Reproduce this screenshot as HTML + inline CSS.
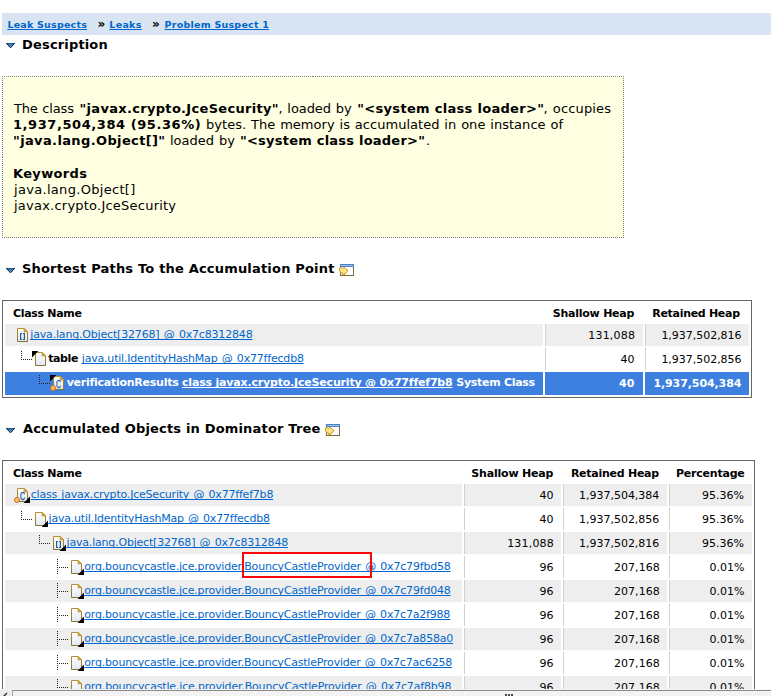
<!DOCTYPE html>
<html><head><meta charset="utf-8"><title>Leak Suspects - Problem Suspect 1</title>
<style>
html,body{margin:0;padding:0;background:#fff;overflow:hidden}
body{width:771px;height:696px;position:relative;font-family:'DejaVu Sans','Liberation Sans',sans-serif;}
.t{position:absolute;white-space:pre;line-height:1;}
.u{text-decoration:underline;text-decoration-thickness:1px;text-underline-offset:1px;text-decoration-skip-ink:none}
.b{position:absolute}
svg{position:absolute;overflow:visible}
a{color:inherit}
</style></head><body>
<svg width="0" height="0" style="left:0;top:0"><defs><linearGradient id="pg" x1="0" y1="0" x2="0" y2="1"><stop offset="0" stop-color="#ffffff"/><stop offset="1" stop-color="#dfe7f6"/></linearGradient><linearGradient id="ps" x1="0" y1="0" x2="0" y2="1"><stop offset="0" stop-color="#b8902c"/><stop offset="1" stop-color="#84702e"/></linearGradient><linearGradient id="tw" x1="0" y1="0" x2="0" y2="1"><stop offset="0" stop-color="#15568c"/><stop offset="1" stop-color="#86bfc9"/></linearGradient></defs></svg>

<div class="b" style="left:2px;top:13px;width:769px;height:22px;background:#d8e4f1;"></div>
<div class="b" style="left:2px;top:76px;width:622px;height:162px;background:#ffffe1;"></div>
<div class="b" style="left:2px;top:76px;width:311px;height:1px;background:repeating-linear-gradient(90deg,#808080 0 1px,transparent 1px 2px);"></div>
<div class="b" style="left:313px;top:76px;width:311px;height:1px;background:repeating-linear-gradient(90deg,#808080 0 1px,transparent 1px 2px);"></div>
<div class="b" style="left:2px;top:237px;width:311px;height:1px;background:repeating-linear-gradient(90deg,#808080 0 1px,transparent 1px 2px);"></div>
<div class="b" style="left:313px;top:237px;width:311px;height:1px;background:repeating-linear-gradient(90deg,#808080 0 1px,transparent 1px 2px);"></div>
<div class="b" style="left:2px;top:76px;width:1px;height:81px;background:repeating-linear-gradient(180deg,#808080 0 1px,transparent 1px 2px);"></div>
<div class="b" style="left:2px;top:157px;width:1px;height:81px;background:repeating-linear-gradient(180deg,#808080 0 1px,transparent 1px 2px);"></div>
<div class="b" style="left:623px;top:76px;width:1px;height:81px;background:repeating-linear-gradient(180deg,#808080 0 1px,transparent 1px 2px);"></div>
<div class="b" style="left:623px;top:157px;width:1px;height:81px;background:repeating-linear-gradient(180deg,#808080 0 1px,transparent 1px 2px);"></div>
<div class="b" style="left:2px;top:300px;width:748px;height:96px;border:1px solid #666666"></div>
<div class="b" style="left:5px;top:324px;width:538px;height:22px;background:#eeeeee;"></div>
<div class="b" style="left:545px;top:324px;width:98px;height:22px;background:#eeeeee;border-left:1px solid #d0d0d0;box-sizing:border-box"></div>
<div class="b" style="left:645px;top:324px;width:104px;height:22px;background:#eeeeee;border-left:1px solid #d0d0d0;box-sizing:border-box"></div>
<div class="b" style="left:545px;top:348px;width:1px;height:22px;background:#d0d0d0;"></div>
<div class="b" style="left:645px;top:348px;width:1px;height:22px;background:#d0d0d0;"></div>
<div class="b" style="left:5px;top:372px;width:538px;height:23px;background:#3d80df;"></div>
<div class="b" style="left:545px;top:372px;width:98px;height:23px;background:#3d80df;"></div>
<div class="b" style="left:645px;top:372px;width:104px;height:23px;background:#3d80df;"></div>
<div class="b" style="left:2px;top:460px;width:751px;height:298px;border:1px solid #666666"></div>
<div class="b" style="left:5px;top:484px;width:457px;height:22px;background:#eeeeee;"></div>
<div class="b" style="left:464px;top:484px;width:97px;height:22px;background:#eeeeee;border-left:1px solid #d0d0d0;box-sizing:border-box"></div>
<div class="b" style="left:563px;top:484px;width:104px;height:22px;background:#eeeeee;border-left:1px solid #d0d0d0;box-sizing:border-box"></div>
<div class="b" style="left:669px;top:484px;width:83px;height:22px;background:#eeeeee;border-left:1px solid #d0d0d0;box-sizing:border-box"></div>
<div class="b" style="left:464px;top:508px;width:1px;height:22px;background:#d0d0d0;"></div>
<div class="b" style="left:563px;top:508px;width:1px;height:22px;background:#d0d0d0;"></div>
<div class="b" style="left:669px;top:508px;width:1px;height:22px;background:#d0d0d0;"></div>
<div class="b" style="left:5px;top:532px;width:457px;height:22px;background:#eeeeee;"></div>
<div class="b" style="left:464px;top:532px;width:97px;height:22px;background:#eeeeee;border-left:1px solid #d0d0d0;box-sizing:border-box"></div>
<div class="b" style="left:563px;top:532px;width:104px;height:22px;background:#eeeeee;border-left:1px solid #d0d0d0;box-sizing:border-box"></div>
<div class="b" style="left:669px;top:532px;width:83px;height:22px;background:#eeeeee;border-left:1px solid #d0d0d0;box-sizing:border-box"></div>
<div class="b" style="left:464px;top:556px;width:1px;height:22px;background:#d0d0d0;"></div>
<div class="b" style="left:563px;top:556px;width:1px;height:22px;background:#d0d0d0;"></div>
<div class="b" style="left:669px;top:556px;width:1px;height:22px;background:#d0d0d0;"></div>
<div class="b" style="left:5px;top:580px;width:457px;height:22px;background:#eeeeee;"></div>
<div class="b" style="left:464px;top:580px;width:97px;height:22px;background:#eeeeee;border-left:1px solid #d0d0d0;box-sizing:border-box"></div>
<div class="b" style="left:563px;top:580px;width:104px;height:22px;background:#eeeeee;border-left:1px solid #d0d0d0;box-sizing:border-box"></div>
<div class="b" style="left:669px;top:580px;width:83px;height:22px;background:#eeeeee;border-left:1px solid #d0d0d0;box-sizing:border-box"></div>
<div class="b" style="left:464px;top:604px;width:1px;height:22px;background:#d0d0d0;"></div>
<div class="b" style="left:563px;top:604px;width:1px;height:22px;background:#d0d0d0;"></div>
<div class="b" style="left:669px;top:604px;width:1px;height:22px;background:#d0d0d0;"></div>
<div class="b" style="left:5px;top:628px;width:457px;height:22px;background:#eeeeee;"></div>
<div class="b" style="left:464px;top:628px;width:97px;height:22px;background:#eeeeee;border-left:1px solid #d0d0d0;box-sizing:border-box"></div>
<div class="b" style="left:563px;top:628px;width:104px;height:22px;background:#eeeeee;border-left:1px solid #d0d0d0;box-sizing:border-box"></div>
<div class="b" style="left:669px;top:628px;width:83px;height:22px;background:#eeeeee;border-left:1px solid #d0d0d0;box-sizing:border-box"></div>
<div class="b" style="left:464px;top:652px;width:1px;height:22px;background:#d0d0d0;"></div>
<div class="b" style="left:563px;top:652px;width:1px;height:22px;background:#d0d0d0;"></div>
<div class="b" style="left:669px;top:652px;width:1px;height:22px;background:#d0d0d0;"></div>
<div class="b" style="left:5px;top:676px;width:457px;height:22px;background:#eeeeee;"></div>
<div class="b" style="left:464px;top:676px;width:97px;height:22px;background:#eeeeee;border-left:1px solid #d0d0d0;box-sizing:border-box"></div>
<div class="b" style="left:563px;top:676px;width:104px;height:22px;background:#eeeeee;border-left:1px solid #d0d0d0;box-sizing:border-box"></div>
<div class="b" style="left:669px;top:676px;width:83px;height:22px;background:#eeeeee;border-left:1px solid #d0d0d0;box-sizing:border-box"></div>
<svg style="left:17px;top:328px" width="11" height="14" viewBox="0 0 11 14"><path d="M0.5 0.5H7.5L10.5 3.5V13.5H0.5Z" fill="url(#pg)" stroke="url(#ps)"/><path d="M7 0.5V4H10.5Z" fill="#d2a642" stroke="#c69c38" stroke-width="0.7"/><g fill="#2a5a90"><rect x="3" y="5" width="1.2" height="7"/><rect x="3" y="5" width="2" height="1"/><rect x="3" y="11" width="2" height="1"/><rect x="6.8" y="5" width="1.2" height="7"/><rect x="6" y="5" width="2" height="1"/><rect x="6" y="11" width="2" height="1"/></g></svg>
<svg style="left:14px;top:350px" width="18" height="16" fill="#222"><rect x="7" y="1" width="1" height="1"/><rect x="7" y="3" width="1" height="1"/><rect x="7" y="5" width="1" height="1"/><rect x="7" y="7" width="1" height="1"/><rect x="7" y="9" width="1" height="1"/><rect x="9" y="9" width="1" height="1"/><rect x="11" y="9" width="1" height="1"/><rect x="13" y="9" width="1" height="1"/><rect x="15" y="9" width="1" height="1"/><rect x="17" y="9" width="1" height="1"/></svg>
<svg style="left:35px;top:352px" width="11" height="14" viewBox="0 0 11 14"><path d="M0.5 0.5H7.5L10.5 3.5V13.5H0.5Z" fill="url(#pg)" stroke="url(#ps)"/><path d="M7 0.5V4H10.5Z" fill="#d2a642" stroke="#c69c38" stroke-width="0.7"/></svg>
<svg style="left:32px;top:351px" width="7" height="7"><path d="M0 0H6.4L0 6.4Z" fill="#000"/></svg>
<svg style="left:32px;top:374px" width="18" height="16" fill="#222"><rect x="7" y="1" width="1" height="1"/><rect x="7" y="3" width="1" height="1"/><rect x="7" y="5" width="1" height="1"/><rect x="7" y="7" width="1" height="1"/><rect x="7" y="9" width="1" height="1"/><rect x="9" y="9" width="1" height="1"/><rect x="11" y="9" width="1" height="1"/><rect x="13" y="9" width="1" height="1"/><rect x="15" y="9" width="1" height="1"/><rect x="17" y="9" width="1" height="1"/></svg>
<svg style="left:53px;top:376px" width="11" height="14" viewBox="0 0 11 14"><path d="M0.5 0.5H7.5L10.5 3.5V13.5H0.5Z" fill="url(#pg)" stroke="url(#ps)"/><path d="M7 0.5V4H10.5Z" fill="#d2a642" stroke="#c69c38" stroke-width="0.7"/><text x="2.9" y="12" font-size="10" font-family="Liberation Sans,sans-serif" fill="#1f5e9c" stroke="#1f5e9c" stroke-width="0.35" textLength="5" lengthAdjust="spacingAndGlyphs">C</text></svg>
<svg style="left:50px;top:375px" width="7" height="7"><path d="M0 0H6.4L0 6.4Z" fill="#000"/></svg>
<svg style="left:50px;top:385px" width="6" height="6"><circle cx="3" cy="3" r="2.5" fill="#ffbf7a" stroke="#cf6a0f"/></svg>
<svg style="left:17px;top:488px" width="11" height="14" viewBox="0 0 11 14"><path d="M0.5 0.5H7.5L10.5 3.5V13.5H0.5Z" fill="url(#pg)" stroke="url(#ps)"/><path d="M7 0.5V4H10.5Z" fill="#d2a642" stroke="#c69c38" stroke-width="0.7"/><text x="2.9" y="12" font-size="10" font-family="Liberation Sans,sans-serif" fill="#1f5e9c" stroke="#1f5e9c" stroke-width="0.35" textLength="5" lengthAdjust="spacingAndGlyphs">C</text></svg>
<svg style="left:14px;top:497px" width="6" height="6"><circle cx="3" cy="3" r="2.5" fill="#ffbf7a" stroke="#cf6a0f"/></svg>
<svg style="left:24px;top:497px" width="6" height="6"><path d="M6 -0.4V6H-0.4Z" fill="#000"/></svg>
<svg style="left:14px;top:510px" width="18" height="16" fill="#222"><rect x="7" y="1" width="1" height="1"/><rect x="7" y="3" width="1" height="1"/><rect x="7" y="5" width="1" height="1"/><rect x="7" y="7" width="1" height="1"/><rect x="7" y="9" width="1" height="1"/><rect x="9" y="9" width="1" height="1"/><rect x="11" y="9" width="1" height="1"/><rect x="13" y="9" width="1" height="1"/><rect x="15" y="9" width="1" height="1"/><rect x="17" y="9" width="1" height="1"/></svg>
<svg style="left:35px;top:512px" width="11" height="14" viewBox="0 0 11 14"><path d="M0.5 0.5H7.5L10.5 3.5V13.5H0.5Z" fill="url(#pg)" stroke="url(#ps)"/><path d="M7 0.5V4H10.5Z" fill="#d2a642" stroke="#c69c38" stroke-width="0.7"/></svg>
<svg style="left:42px;top:521px" width="6" height="6"><path d="M6 -0.4V6H-0.4Z" fill="#000"/></svg>
<svg style="left:32px;top:534px" width="18" height="16" fill="#222"><rect x="7" y="1" width="1" height="1"/><rect x="7" y="3" width="1" height="1"/><rect x="7" y="5" width="1" height="1"/><rect x="7" y="7" width="1" height="1"/><rect x="7" y="9" width="1" height="1"/><rect x="9" y="9" width="1" height="1"/><rect x="11" y="9" width="1" height="1"/><rect x="13" y="9" width="1" height="1"/><rect x="15" y="9" width="1" height="1"/><rect x="17" y="9" width="1" height="1"/></svg>
<svg style="left:53px;top:536px" width="11" height="14" viewBox="0 0 11 14"><path d="M0.5 0.5H7.5L10.5 3.5V13.5H0.5Z" fill="url(#pg)" stroke="url(#ps)"/><path d="M7 0.5V4H10.5Z" fill="#d2a642" stroke="#c69c38" stroke-width="0.7"/><g fill="#2a5a90"><rect x="3" y="5" width="1.2" height="7"/><rect x="3" y="5" width="2" height="1"/><rect x="3" y="11" width="2" height="1"/><rect x="6.8" y="5" width="1.2" height="7"/><rect x="6" y="5" width="2" height="1"/><rect x="6" y="11" width="2" height="1"/></g></svg>
<svg style="left:60px;top:545px" width="6" height="6"><path d="M6 -0.4V6H-0.4Z" fill="#000"/></svg>
<svg style="left:50px;top:558px" width="18" height="16" fill="#222"><rect x="7" y="1" width="1" height="1"/><rect x="7" y="3" width="1" height="1"/><rect x="7" y="5" width="1" height="1"/><rect x="7" y="7" width="1" height="1"/><rect x="7" y="9" width="1" height="1"/><rect x="7" y="11" width="1" height="1"/><rect x="7" y="13" width="1" height="1"/><rect x="7" y="15" width="1" height="1"/><rect x="9" y="9" width="1" height="1"/><rect x="11" y="9" width="1" height="1"/><rect x="13" y="9" width="1" height="1"/><rect x="15" y="9" width="1" height="1"/><rect x="17" y="9" width="1" height="1"/></svg>
<svg style="left:71px;top:560px" width="11" height="14" viewBox="0 0 11 14"><path d="M0.5 0.5H7.5L10.5 3.5V13.5H0.5Z" fill="url(#pg)" stroke="url(#ps)"/><path d="M7 0.5V4H10.5Z" fill="#d2a642" stroke="#c69c38" stroke-width="0.7"/></svg>
<svg style="left:78px;top:569px" width="6" height="6"><path d="M6 -0.4V6H-0.4Z" fill="#000"/></svg>
<svg style="left:50px;top:582px" width="18" height="16" fill="#222"><rect x="7" y="1" width="1" height="1"/><rect x="7" y="3" width="1" height="1"/><rect x="7" y="5" width="1" height="1"/><rect x="7" y="7" width="1" height="1"/><rect x="7" y="9" width="1" height="1"/><rect x="7" y="11" width="1" height="1"/><rect x="7" y="13" width="1" height="1"/><rect x="7" y="15" width="1" height="1"/><rect x="9" y="9" width="1" height="1"/><rect x="11" y="9" width="1" height="1"/><rect x="13" y="9" width="1" height="1"/><rect x="15" y="9" width="1" height="1"/><rect x="17" y="9" width="1" height="1"/></svg>
<svg style="left:71px;top:584px" width="11" height="14" viewBox="0 0 11 14"><path d="M0.5 0.5H7.5L10.5 3.5V13.5H0.5Z" fill="url(#pg)" stroke="url(#ps)"/><path d="M7 0.5V4H10.5Z" fill="#d2a642" stroke="#c69c38" stroke-width="0.7"/></svg>
<svg style="left:78px;top:593px" width="6" height="6"><path d="M6 -0.4V6H-0.4Z" fill="#000"/></svg>
<svg style="left:50px;top:606px" width="18" height="16" fill="#222"><rect x="7" y="1" width="1" height="1"/><rect x="7" y="3" width="1" height="1"/><rect x="7" y="5" width="1" height="1"/><rect x="7" y="7" width="1" height="1"/><rect x="7" y="9" width="1" height="1"/><rect x="7" y="11" width="1" height="1"/><rect x="7" y="13" width="1" height="1"/><rect x="7" y="15" width="1" height="1"/><rect x="9" y="9" width="1" height="1"/><rect x="11" y="9" width="1" height="1"/><rect x="13" y="9" width="1" height="1"/><rect x="15" y="9" width="1" height="1"/><rect x="17" y="9" width="1" height="1"/></svg>
<svg style="left:71px;top:608px" width="11" height="14" viewBox="0 0 11 14"><path d="M0.5 0.5H7.5L10.5 3.5V13.5H0.5Z" fill="url(#pg)" stroke="url(#ps)"/><path d="M7 0.5V4H10.5Z" fill="#d2a642" stroke="#c69c38" stroke-width="0.7"/></svg>
<svg style="left:78px;top:617px" width="6" height="6"><path d="M6 -0.4V6H-0.4Z" fill="#000"/></svg>
<svg style="left:50px;top:630px" width="18" height="16" fill="#222"><rect x="7" y="1" width="1" height="1"/><rect x="7" y="3" width="1" height="1"/><rect x="7" y="5" width="1" height="1"/><rect x="7" y="7" width="1" height="1"/><rect x="7" y="9" width="1" height="1"/><rect x="7" y="11" width="1" height="1"/><rect x="7" y="13" width="1" height="1"/><rect x="7" y="15" width="1" height="1"/><rect x="9" y="9" width="1" height="1"/><rect x="11" y="9" width="1" height="1"/><rect x="13" y="9" width="1" height="1"/><rect x="15" y="9" width="1" height="1"/><rect x="17" y="9" width="1" height="1"/></svg>
<svg style="left:71px;top:632px" width="11" height="14" viewBox="0 0 11 14"><path d="M0.5 0.5H7.5L10.5 3.5V13.5H0.5Z" fill="url(#pg)" stroke="url(#ps)"/><path d="M7 0.5V4H10.5Z" fill="#d2a642" stroke="#c69c38" stroke-width="0.7"/></svg>
<svg style="left:78px;top:641px" width="6" height="6"><path d="M6 -0.4V6H-0.4Z" fill="#000"/></svg>
<svg style="left:50px;top:654px" width="18" height="16" fill="#222"><rect x="7" y="1" width="1" height="1"/><rect x="7" y="3" width="1" height="1"/><rect x="7" y="5" width="1" height="1"/><rect x="7" y="7" width="1" height="1"/><rect x="7" y="9" width="1" height="1"/><rect x="7" y="11" width="1" height="1"/><rect x="7" y="13" width="1" height="1"/><rect x="7" y="15" width="1" height="1"/><rect x="9" y="9" width="1" height="1"/><rect x="11" y="9" width="1" height="1"/><rect x="13" y="9" width="1" height="1"/><rect x="15" y="9" width="1" height="1"/><rect x="17" y="9" width="1" height="1"/></svg>
<svg style="left:71px;top:656px" width="11" height="14" viewBox="0 0 11 14"><path d="M0.5 0.5H7.5L10.5 3.5V13.5H0.5Z" fill="url(#pg)" stroke="url(#ps)"/><path d="M7 0.5V4H10.5Z" fill="#d2a642" stroke="#c69c38" stroke-width="0.7"/></svg>
<svg style="left:78px;top:665px" width="6" height="6"><path d="M6 -0.4V6H-0.4Z" fill="#000"/></svg>
<svg style="left:50px;top:678px" width="18" height="16" fill="#222"><rect x="7" y="1" width="1" height="1"/><rect x="7" y="3" width="1" height="1"/><rect x="7" y="5" width="1" height="1"/><rect x="7" y="7" width="1" height="1"/><rect x="7" y="9" width="1" height="1"/><rect x="9" y="9" width="1" height="1"/><rect x="11" y="9" width="1" height="1"/><rect x="13" y="9" width="1" height="1"/><rect x="15" y="9" width="1" height="1"/><rect x="17" y="9" width="1" height="1"/></svg>
<svg style="left:71px;top:680px" width="11" height="14" viewBox="0 0 11 14"><path d="M0.5 0.5H7.5L10.5 3.5V13.5H0.5Z" fill="url(#pg)" stroke="url(#ps)"/><path d="M7 0.5V4H10.5Z" fill="#d2a642" stroke="#c69c38" stroke-width="0.7"/></svg>
<svg style="left:78px;top:689px" width="6" height="6"><path d="M6 -0.4V6H-0.4Z" fill="#000"/></svg>
<svg style="left:6px;top:43px" width="9" height="5" viewBox="0 0 9 5"><path d="M0 0H9L4.5 5Z" fill="url(#tw)"/><path d="M0.2 0.2L4.5 4.8L8.8 0.2" fill="none" stroke="#0a0a66" stroke-width="1"/></svg>
<svg style="left:6px;top:268px" width="9" height="5" viewBox="0 0 9 5"><path d="M0 0H9L4.5 5Z" fill="url(#tw)"/><path d="M0.2 0.2L4.5 4.8L8.8 0.2" fill="none" stroke="#0a0a66" stroke-width="1"/></svg>
<svg style="left:6px;top:428px" width="9" height="5" viewBox="0 0 9 5"><path d="M0 0H9L4.5 5Z" fill="url(#tw)"/><path d="M0.2 0.2L4.5 4.8L8.8 0.2" fill="none" stroke="#0a0a66" stroke-width="1"/></svg>
<svg style="left:339px;top:264px" width="15" height="12" viewBox="0 0 15 12"><rect x="1.5" y="0.5" width="13" height="11" fill="#fff" stroke="#7a6a3c"/><rect x="1" y="0" width="14" height="3" fill="#4a80c4"/><rect x="2" y="1" width="12" height="1" fill="#9cc0ec"/><path d="M0.5 4.2L1.8 3.4L3.2 4.6L4.6 3.4L6.2 4.2L9 6.8L6.6 9.2L5.6 9.4L5.2 11H3.8V9.2L1.6 8.6L0.5 6.6Z" fill="#fde68a" stroke="#cf8f14" stroke-width="1"/></svg>
<svg style="left:325px;top:424px" width="15" height="12" viewBox="0 0 15 12"><rect x="1.5" y="0.5" width="13" height="11" fill="#fff" stroke="#7a6a3c"/><rect x="1" y="0" width="14" height="3" fill="#4a80c4"/><rect x="2" y="1" width="12" height="1" fill="#9cc0ec"/><path d="M0.5 4.2L1.8 3.4L3.2 4.6L4.6 3.4L6.2 4.2L9 6.8L6.6 9.2L5.6 9.4L5.2 11H3.8V9.2L1.6 8.6L0.5 6.6Z" fill="#fde68a" stroke="#cf8f14" stroke-width="1"/></svg>
<a class="t u" href="#" style="left:7.41px;top:20px;font-size:9.5px;font-weight:700;color:#0066cc;letter-spacing:0.211px;word-spacing:0.00px">Leak Suspects</a>
<span class="t" style="left:97.60px;top:18px;font-size:12px;font-weight:700;color:#000;letter-spacing:0.000px;word-spacing:0.00px">»</span>
<a class="t u" href="#" style="left:109.30px;top:20px;font-size:9.5px;font-weight:700;color:#0066cc;letter-spacing:0.302px;word-spacing:0.00px">Leaks</a>
<span class="t" style="left:152.00px;top:18px;font-size:12px;font-weight:700;color:#000;letter-spacing:0.000px;word-spacing:0.00px">»</span>
<a class="t u" href="#" style="left:164.61px;top:20px;font-size:9.5px;font-weight:700;color:#0066cc;letter-spacing:0.236px;word-spacing:0.00px">Problem Suspect 1</a>
<span class="t" style="left:22.10px;top:38px;font-size:13px;font-weight:700;color:#000;letter-spacing:0.154px;word-spacing:0.00px">Description</span>
<span class="t" style="left:22.00px;top:262px;font-size:13px;font-weight:700;color:#000;letter-spacing:0.188px;word-spacing:0.00px">Shortest Paths To the Accumulation Point</span>
<span class="t" style="left:23.00px;top:422px;font-size:13px;font-weight:700;color:#000;letter-spacing:0.175px;word-spacing:0.00px">Accumulated Objects in Dominator Tree</span>
<span class="t" style="left:14.00px;top:102px;font-size:13px;font-weight:400;color:#000;letter-spacing:-0.175px;word-spacing:0.72px">The class</span>
<span class="t" style="left:79.50px;top:102px;font-size:13px;font-weight:700;color:#000;letter-spacing:0.308px;word-spacing:0.00px">&quot;javax.crypto.JceSecurity&quot;</span>
<span class="t" style="left:278.50px;top:102px;font-size:13px;font-weight:400;color:#000;letter-spacing:-0.070px;word-spacing:0.72px">, loaded by</span>
<span class="t" style="left:357.25px;top:102px;font-size:13px;font-weight:700;color:#000;letter-spacing:0.302px;word-spacing:0.00px">&quot;&lt;system class loader&gt;&quot;</span>
<span class="t" style="left:543.50px;top:102px;font-size:13px;font-weight:400;color:#000;letter-spacing:0.156px;word-spacing:0.72px">, occupies</span>
<span class="t" style="left:13.00px;top:118px;font-size:13px;font-weight:700;color:#000;letter-spacing:0.567px;word-spacing:0.00px">1,937,504,384 (95.36%)</span>
<span class="t" style="left:206.00px;top:118px;font-size:13px;font-weight:400;color:#000;letter-spacing:0.028px;word-spacing:0.72px">bytes. The memory is accumulated in one instance of</span>
<span class="t" style="left:13.00px;top:134px;font-size:13px;font-weight:700;color:#000;letter-spacing:0.368px;word-spacing:0.00px">&quot;java.lang.Object[]&quot;</span>
<span class="t" style="left:170.00px;top:134px;font-size:13px;font-weight:400;color:#000;letter-spacing:0.000px;word-spacing:0.72px">loaded by</span>
<span class="t" style="left:240.00px;top:134px;font-size:13px;font-weight:700;color:#000;letter-spacing:0.223px;word-spacing:0.00px">&quot;&lt;system class loader&gt;&quot;</span>
<span class="t" style="left:426.00px;top:134px;font-size:13px;font-weight:400;color:#000;letter-spacing:0.000px;word-spacing:0.72px">.</span>
<span class="t" style="left:13.00px;top:167px;font-size:13px;font-weight:700;color:#000;letter-spacing:0.350px;word-spacing:0.00px">Keywords</span>
<span class="t" style="left:14.00px;top:183px;font-size:13px;font-weight:400;color:#000;letter-spacing:0.309px;word-spacing:0.72px">java.lang.Object[]</span>
<span class="t" style="left:14.00px;top:199px;font-size:13px;font-weight:400;color:#000;letter-spacing:0.228px;word-spacing:0.72px">javax.crypto.JceSecurity</span>
<span class="t" style="left:13.00px;top:308px;font-size:11px;font-weight:700;color:#000;letter-spacing:-0.311px;word-spacing:0.00px">Class Name</span>
<span class="t" style="left:552.80px;top:308px;font-size:11px;font-weight:700;color:#000;letter-spacing:-0.242px;word-spacing:0.00px">Shallow Heap</span>
<span class="t" style="left:652.30px;top:308px;font-size:11px;font-weight:700;color:#000;letter-spacing:-0.303px;word-spacing:0.00px">Retained Heap</span>
<a class="t u" href="#" style="left:30.30px;top:329px;font-size:11px;font-weight:400;color:#0066cc;letter-spacing:-0.177px;word-spacing:1.00px">java.lang.Object[32768] @ 0x7c8312848</a>
<span class="t" style="left:588.28px;top:330px;font-size:11px;font-weight:400;color:#000;letter-spacing:0.187px;word-spacing:1.00px">131,088</span>
<span class="t" style="left:661.38px;top:330px;font-size:11px;font-weight:400;color:#000;letter-spacing:-0.023px;word-spacing:1.00px">1,937,502,816</span>
<span class="t" style="left:48.20px;top:353px;font-size:11px;font-weight:700;color:#000;letter-spacing:-0.385px;word-spacing:0.00px">table</span>
<a class="t u" href="#" style="left:81.80px;top:353px;font-size:11px;font-weight:400;color:#0066cc;letter-spacing:-0.195px;word-spacing:1.00px">java.util.IdentityHashMap @ 0x77ffecdb8</a>
<span class="t" style="left:620.60px;top:354px;font-size:11px;font-weight:400;color:#000;letter-spacing:0.000px;word-spacing:1.00px">40</span>
<span class="t" style="left:661.38px;top:354px;font-size:11px;font-weight:400;color:#000;letter-spacing:-0.023px;word-spacing:1.00px">1,937,502,856</span>
<span class="t" style="left:66.70px;top:377px;font-size:11px;font-weight:700;color:#fff;letter-spacing:-0.257px;word-spacing:0.00px">verificationResults</span>
<a class="t u" href="#" style="left:182.00px;top:377px;font-size:11px;font-weight:700;color:#fff;letter-spacing:-0.189px;word-spacing:0.00px">class javax.crypto.JceSecurity @ 0x77ffef7b8</a>
<span class="t" style="left:456.25px;top:377px;font-size:11px;font-weight:700;color:#fff;letter-spacing:-0.286px;word-spacing:0.00px">System Class</span>
<span class="t" style="left:619.00px;top:378px;font-size:11px;font-weight:700;color:#fff;letter-spacing:0.000px;word-spacing:0.00px">40</span>
<span class="t" style="left:653.42px;top:378px;font-size:11px;font-weight:700;color:#fff;letter-spacing:-0.093px;word-spacing:0.00px">1,937,504,384</span>
<span class="t" style="left:13.00px;top:468px;font-size:11px;font-weight:700;color:#000;letter-spacing:-0.311px;word-spacing:0.00px">Class Name</span>
<span class="t" style="left:471.30px;top:468px;font-size:11px;font-weight:700;color:#000;letter-spacing:-0.191px;word-spacing:0.00px">Shallow Heap</span>
<span class="t" style="left:570.90px;top:468px;font-size:11px;font-weight:700;color:#000;letter-spacing:-0.257px;word-spacing:0.00px">Retained Heap</span>
<span class="t" style="left:676.00px;top:468px;font-size:11px;font-weight:700;color:#000;letter-spacing:-0.218px;word-spacing:0.00px">Percentage</span>
<a class="t u" href="#" style="left:30.70px;top:489px;font-size:11px;font-weight:400;color:#0066cc;letter-spacing:-0.201px;word-spacing:1.00px">class javax.crypto.JceSecurity @ 0x77ffef7b8</a>
<span class="t" style="left:539.50px;top:490px;font-size:11px;font-weight:400;color:#000;letter-spacing:0.000px;word-spacing:1.00px">40</span>
<span class="t" style="left:579.08px;top:490px;font-size:11px;font-weight:400;color:#000;letter-spacing:-0.023px;word-spacing:1.00px">1,937,504,384</span>
<span class="t" style="left:702.10px;top:490px;font-size:11px;font-weight:400;color:#000;letter-spacing:0.000px;word-spacing:1.00px">95.36%</span>
<a class="t u" href="#" style="left:48.61px;top:513px;font-size:11px;font-weight:400;color:#0066cc;letter-spacing:-0.216px;word-spacing:1.00px">java.util.IdentityHashMap @ 0x77ffecdb8</a>
<span class="t" style="left:539.50px;top:514px;font-size:11px;font-weight:400;color:#000;letter-spacing:0.000px;word-spacing:1.00px">40</span>
<span class="t" style="left:579.08px;top:514px;font-size:11px;font-weight:400;color:#000;letter-spacing:-0.023px;word-spacing:1.00px">1,937,502,856</span>
<span class="t" style="left:702.10px;top:514px;font-size:11px;font-weight:400;color:#000;letter-spacing:0.000px;word-spacing:1.00px">95.36%</span>
<a class="t u" href="#" style="left:66.61px;top:537px;font-size:11px;font-weight:400;color:#0066cc;letter-spacing:-0.198px;word-spacing:1.00px">java.lang.Object[32768] @ 0x7c8312848</a>
<span class="t" style="left:507.18px;top:538px;font-size:11px;font-weight:400;color:#000;letter-spacing:0.187px;word-spacing:1.00px">131,088</span>
<span class="t" style="left:579.08px;top:538px;font-size:11px;font-weight:400;color:#000;letter-spacing:-0.023px;word-spacing:1.00px">1,937,502,816</span>
<span class="t" style="left:702.10px;top:538px;font-size:11px;font-weight:400;color:#000;letter-spacing:0.000px;word-spacing:1.00px">95.36%</span>
<a class="t u" href="#" style="left:84.30px;top:561px;font-size:11px;font-weight:400;color:#0066cc;letter-spacing:-0.188px;word-spacing:1.00px">org.bouncycastle.jce.provider.BouncyCastleProvider @ 0x7c79fbd58</a>
<span class="t" style="left:539.50px;top:562px;font-size:11px;font-weight:400;color:#000;letter-spacing:0.000px;word-spacing:1.00px">96</span>
<span class="t" style="left:613.88px;top:562px;font-size:11px;font-weight:400;color:#000;letter-spacing:0.070px;word-spacing:1.00px">207,168</span>
<span class="t" style="left:709.60px;top:562px;font-size:11px;font-weight:400;color:#000;letter-spacing:0.000px;word-spacing:1.00px">0.01%</span>
<a class="t u" href="#" style="left:84.30px;top:585px;font-size:11px;font-weight:400;color:#0066cc;letter-spacing:-0.188px;word-spacing:1.00px">org.bouncycastle.jce.provider.BouncyCastleProvider @ 0x7c79fd048</a>
<span class="t" style="left:539.50px;top:586px;font-size:11px;font-weight:400;color:#000;letter-spacing:0.000px;word-spacing:1.00px">96</span>
<span class="t" style="left:613.88px;top:586px;font-size:11px;font-weight:400;color:#000;letter-spacing:0.070px;word-spacing:1.00px">207,168</span>
<span class="t" style="left:709.60px;top:586px;font-size:11px;font-weight:400;color:#000;letter-spacing:0.000px;word-spacing:1.00px">0.01%</span>
<a class="t u" href="#" style="left:84.30px;top:609px;font-size:11px;font-weight:400;color:#0066cc;letter-spacing:-0.191px;word-spacing:1.00px">org.bouncycastle.jce.provider.BouncyCastleProvider @ 0x7c7a2f988</a>
<span class="t" style="left:539.50px;top:610px;font-size:11px;font-weight:400;color:#000;letter-spacing:0.000px;word-spacing:1.00px">96</span>
<span class="t" style="left:613.88px;top:610px;font-size:11px;font-weight:400;color:#000;letter-spacing:0.070px;word-spacing:1.00px">207,168</span>
<span class="t" style="left:709.60px;top:610px;font-size:11px;font-weight:400;color:#000;letter-spacing:0.000px;word-spacing:1.00px">0.01%</span>
<a class="t u" href="#" style="left:84.30px;top:633px;font-size:11px;font-weight:400;color:#0066cc;letter-spacing:-0.190px;word-spacing:1.00px">org.bouncycastle.jce.provider.BouncyCastleProvider @ 0x7c7a858a0</a>
<span class="t" style="left:539.50px;top:634px;font-size:11px;font-weight:400;color:#000;letter-spacing:0.000px;word-spacing:1.00px">96</span>
<span class="t" style="left:613.88px;top:634px;font-size:11px;font-weight:400;color:#000;letter-spacing:0.070px;word-spacing:1.00px">207,168</span>
<span class="t" style="left:709.60px;top:634px;font-size:11px;font-weight:400;color:#000;letter-spacing:0.000px;word-spacing:1.00px">0.01%</span>
<a class="t u" href="#" style="left:84.30px;top:657px;font-size:11px;font-weight:400;color:#0066cc;letter-spacing:-0.195px;word-spacing:1.00px">org.bouncycastle.jce.provider.BouncyCastleProvider @ 0x7c7ac6258</a>
<span class="t" style="left:539.50px;top:658px;font-size:11px;font-weight:400;color:#000;letter-spacing:0.000px;word-spacing:1.00px">96</span>
<span class="t" style="left:613.88px;top:658px;font-size:11px;font-weight:400;color:#000;letter-spacing:0.070px;word-spacing:1.00px">207,168</span>
<span class="t" style="left:709.60px;top:658px;font-size:11px;font-weight:400;color:#000;letter-spacing:0.000px;word-spacing:1.00px">0.01%</span>
<a class="t u" href="#" style="left:84.30px;top:681px;font-size:11px;font-weight:400;color:#0066cc;letter-spacing:-0.174px;word-spacing:1.00px">org.bouncycastle.jce.provider.BouncyCastleProvider @ 0x7c7af8b98</a>
<span class="t" style="left:539.50px;top:682px;font-size:11px;font-weight:400;color:#000;letter-spacing:0.000px;word-spacing:1.00px">96</span>
<span class="t" style="left:613.88px;top:682px;font-size:11px;font-weight:400;color:#000;letter-spacing:0.070px;word-spacing:1.00px">207,168</span>
<span class="t" style="left:709.60px;top:682px;font-size:11px;font-weight:400;color:#000;letter-spacing:0.000px;word-spacing:1.00px">0.01%</span>
<div class="b" style="left:242px;top:552px;width:126px;height:22px;border:2px solid #f80808"></div>
<div class="b" style="left:0px;top:689px;width:771px;height:7px;background:#f4f4f4;"></div>
<div class="b" style="left:0px;top:690px;width:12px;height:6px;background:#ececec;"></div>
<div class="b" style="left:12px;top:690px;width:759px;height:6px;background:#f3f3f3;border-top:1px solid #8c8c8c;border-left:1px solid #a8a8a8;box-sizing:border-box"></div>
<svg style="left:2px;top:692px" width="6" height="4"><path d="M5 1L1.5 4.5" stroke="#333" stroke-width="1.4"/></svg>
<svg style="left:505px;top:694px" width="8" height="2" fill="#444"><rect x="0" y="0" width="2" height="2"/><rect x="3" y="0" width="2" height="2"/><rect x="6" y="0" width="2" height="2"/></svg>
</body></html>
